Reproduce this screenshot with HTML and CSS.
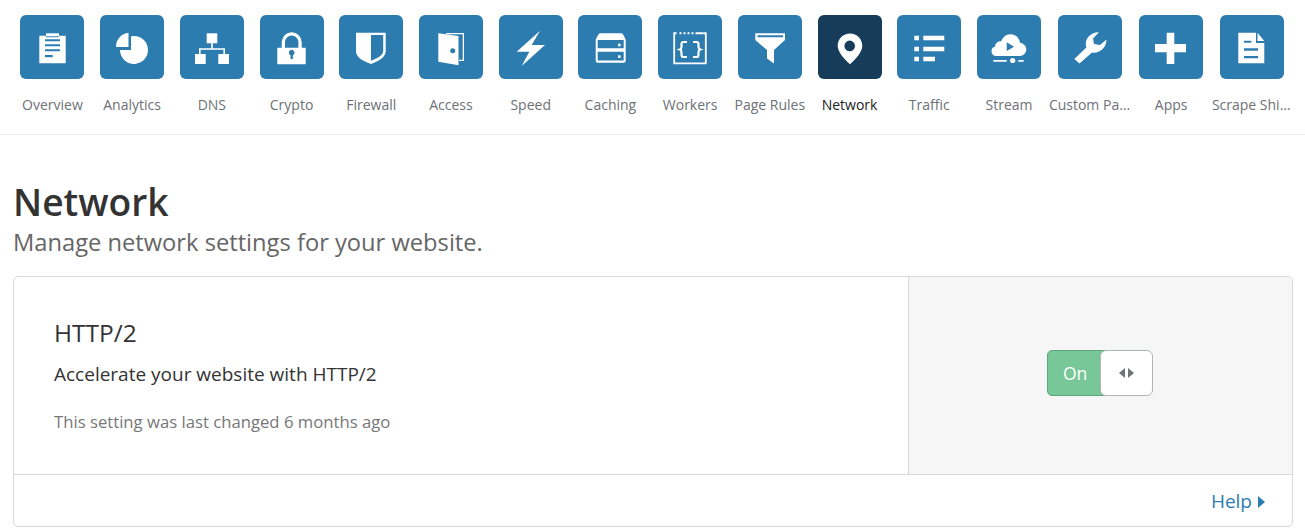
FILE: index.html
```html
<!DOCTYPE html>
<html lang="en">
<head>
<meta charset="utf-8">
<title>Network</title>
<link rel="stylesheet" href="styles.css">
</head>
<body>
<nav class="nav">
  <a class="nav-item"><span class="tile"><svg viewBox="0 0 64 64"><path fill-rule="evenodd" d="M19.3 20.7h6.7v1.6h13v-1.6h6.7v27.6H19.3zM25 24.3v2h15v-2zM25 29.3v2h15v-2zM25 34.3v2h15v-2zM25 40v2.3h7.7V40z"/><rect x="26" y="18.3" width="13" height="3"/></svg></span><span class="label">Overview</span></a>
  <a class="nav-item"><span class="tile"><svg viewBox="0 0 64 64"><path d="M28.5 32V17.7A14 14 0 0 0 16 32z"/><path d="M31 21.3A14 14 0 1 1 20 35h11z"/></svg></span><span class="label">Analytics</span></a>
  <a class="nav-item"><span class="tile"><svg viewBox="0 0 64 64"><rect x="26.7" y="18.3" width="10.6" height="10"/><rect x="15" y="39" width="10.7" height="10"/><rect x="38.3" y="39" width="10.7" height="10"/><path d="M31.2 28h1.6v5.2H45V39h-1.6v-4.2H20.6V39H19v-5.8h12.2z"/></svg></span><span class="label">DNS</span></a>
  <a class="nav-item"><span class="tile"><svg viewBox="0 0 64 64"><path fill-rule="evenodd" d="M21.7 32.7v-5.4a10 10 0 0 1 20 0v5.4h4v16.6H17.3V32.7zM25 32.7h13.4v-5.4a6.700 6.700 0 0 0-13.400 0zM30.500 40.200v3.800h2.400v-3.800a2.800 2.800 0 1 0-2.400 0z"/></svg></span><span class="label">Crypto</span></a>
  <a class="nav-item"><span class="tile"><svg viewBox="0 0 64 64"><path fill-rule="evenodd" d="M17 17.700h29.700V36c0 5-4 9-14.700 13C21 45 17 41 17 36zM32 20v25.800c8.500-3.300 12.200-6.300 12.200-9.800V20z"/></svg></span><span class="label">Firewall</span></a>
  <a class="nav-item"><span class="tile"><svg viewBox="0 0 64 64"><path fill-rule="evenodd" d="M19.300 18.300L39.500 21v29.300l-20.200-3.600zM33.700 33.200a2.500 2.500 0 1 0 0 5 2.500 2.500 0 0 0 0-5z"/><path d="M27 18h18v28h-5v-1.300h3.700V19.300H27z"/></svg></span><span class="label">Access</span></a>
  <a class="nav-item"><span class="tile"><svg viewBox="0 0 64 64"><path d="M41 15.700L17.700 36.700h12.600L22.700 51 46 30H32.700z"/></svg></span><span class="label">Speed</span></a>
  <a class="nav-item"><span class="tile"><svg viewBox="0 0 64 64"><path fill-rule="evenodd" d="M22.500 18.300h20.500c.8 0 1.500.4 2 1l2.700 5.200v21.200c0 1.100-.9 2-2 2H19.700c-1.100 0-2-.9-2-2V24.500l2.800-5.200c.5-.6 1.200-1 2-1zM19.700 25v8.300h26V25zM19.700 36.700V45.500h26v-8.800z"/><rect x="40" y="28.700" width="2.600" height="2.600"/><rect x="40" y="40.300" width="2.600" height="2.600"/></svg></span><span class="label">Caching</span></a>
  <a class="nav-item"><span class="tile"><svg viewBox="0 0 64 64"><path d="M15.300 17.300h3.200v2h-1.400v28.200h29.800V19.300h-1.400v-2h3.200v32H15.300z"/><path d="M21.500 17.300h2v2h-2zM25.500 17.300h2v2h-2zM29.500 17.300h2v2h-2zM33.500 17.300h2v2h-2zM37.500 17.300h8v2h-8z"/><path class="brace" d="M29 27h-3.500c-1.500 0-2 .7-2 2v3c0 1.400-.6 2.100-1.800 2.500 1.200.4 1.800 1.100 1.800 2.500v3c0 1.300.5 2 2 2H29M35 27h3.500c1.500 0 2 .7 2 2v3c0 1.400.6 2.100 1.800 2.500-1.200.4-1.800 1.100-1.800 2.500v3c0 1.300-.5 2-2 2H35"/></svg></span><span class="label">Workers</span></a>
  <a class="nav-item"><span class="tile"><svg viewBox="0 0 64 64"><path fill-rule="evenodd" d="M17.300 18.300H47V25L36 35v13.500L29 43.500V35L17.300 25zM19.500 20.300v2h25.500v-2z"/></svg></span><span class="label">Page Rules</span></a>
  <a class="nav-item active"><span class="tile"><svg viewBox="0 0 64 64"><path fill-rule="evenodd" d="M32 18.500c6.800 0 12.300 5.400 12.300 12.200 0 6.500-6.500 13-12.300 18.600-5.800-5.600-12.300-12.100-12.300-18.600 0-6.800 5.500-12.200 12.300-12.200zM31.700 25.600a5.300 5.300 0 1 0 0 10.600 5.300 5.300 0 0 0 0-10.600z"/></svg></span><span class="label">Network</span></a>
  <a class="nav-item"><span class="tile"><svg viewBox="0 0 64 64"><path d="M17.300 20.700H22v4.600h-4.700zM26.300 20.700h21v4.600h-21zM17.300 31.700H22v4.600h-4.700zM26.300 31.700h21v4.600h-21zM17.300 41.700H22v4.600h-4.700zM26.300 41.700H38v4.600H26.300z"/></svg></span><span class="label">Traffic</span></a>
  <a class="nav-item"><span class="tile"><svg viewBox="0 0 64 64"><path fill-rule="evenodd" d="M19 41a4.800 4.800 0 0 1-1-9.400c.2-3.400 3-5.800 6.200-5.300 1.600-4.200 5-7 9.300-7 5 0 9 3.500 9.500 8.500 3.600.4 6.300 3.200 6.300 6.800 0 3.600-3 6.400-6.500 6.400zM29.700 27.300V36l7.300-4.300z"/><path d="M16.300 45h13.400v1.700H16.300zM41.300 45h5.400v1.700h-5.400z"/><circle cx="35.700" cy="45.500" r="2.600"/></svg></span><span class="label">Stream</span></a>
  <a class="nav-item"><span class="tile"><svg viewBox="0 0 64 64"><path d="M21.500 48.500L16.300 44l12-11.500C26 24 32 17.500 41 17.300l-6 6.200 1 5.500 6 1 6.500-5.500C48.500 32 42 39 34 37.500z"/></svg></span><span class="label">Custom Pages</span></a>
  <a class="nav-item"><span class="tile"><svg viewBox="0 0 64 64"><path d="M27.700 17.700h7.600V29H47v8.300H35.300V49h-7.600V37.300H16V29h11.700z"/></svg></span><span class="label">Apps</span></a>
  <a class="nav-item"><span class="tile"><svg viewBox="0 0 64 64"><path fill-rule="evenodd" d="M18.300 17.700H36V28h8.300v20.300h-26zM24 25.700v2h7.300v-2zM24 33.300v2.400h14v-2.400zM24 41v2.300h14V41z"/><path d="M37.500 17.700l6.800 8.300h-6.800z"/></svg></span><span class="label">Scrape Shield</span></a>
</nav>
<main class="page">
  <h1 class="title">Network</h1>
  <p class="subtitle">Manage network settings for your website.</p>
  <section class="card">
    <div class="card-body">
      <div class="card-text">
        <h2 class="card-title">HTTP/2</h2>
        <p class="card-desc">Accelerate your website with HTTP/2</p>
        <p class="card-meta">This setting was last changed 6 months ago</p>
      </div>
      <div class="card-control">
        <div class="toggle">
          <span class="toggle-on">On</span>
          <span class="toggle-knob"><i class="arrow arrow-left"></i><i class="arrow arrow-right"></i></span>
        </div>
      </div>
    </div>
    <div class="card-footer"><a class="help">Help<i class="help-caret"></i></a></div>
  </section>
</main>
</body>
</html>
```
FILE: styles.css
```css
* { box-sizing: border-box; }
html, body { margin: 0; padding: 0; }
body {
  background: #fff;
  font-family: "Open Sans", sans-serif;
  color: #333;
  width: 1305px;
  height: 532px;
  overflow: hidden;
}
.nav {
  display: grid;
  grid-template-columns: repeat(13, 79.72px) 81.5px 81.5px 81.1px;
  height: 135px;
  padding: 15px 0 0 12.54px;
  border-bottom: 1px solid #ebebeb;
}
.nav-item {
  display: flex;
  flex-direction: column;
  align-items: center;
  min-width: 0;
  color: #6d7176;
}
.tile {
  width: 64px;
  height: 64px;
  border-radius: 6px;
  background: #2c7cb0;
  display: block;
  flex: none;
}
.tile svg { display: block; width: 64px; height: 64px; fill: #fff; }
.tile svg .brace { fill: none; stroke: #fff; stroke-width: 2.2; }
.label {
  display: block;
  width: 100%;
  margin-top: 16px;
  font-size: 14px;
  line-height: 20px;
  text-align: center;
  white-space: nowrap;
  overflow: hidden;
  text-overflow: ellipsis;
}
.active { color: #222; }
.active .tile { background: #163c5a; }
.page { padding: 0 12px 0 13px; }
.title {
  margin: 44px 0 0;
  font-size: 37.2px;
  line-height: 46px;
  font-weight: 600;
  color: #333;
}
.subtitle {
  margin: 2px 0 0;
  font-size: 23.7px;
  line-height: 30px;
  color: #666;
}
.card {
  margin-top: 19px;
  height: 251px;
  border: 1px solid #d9d9d9;
  border-radius: 5px;
  display: flex;
  flex-direction: column;
}
.card-body {
  display: flex;
  height: 198px;
  border-bottom: 1px solid #d9d9d9;
}
.card-text { flex: 1; padding: 40px 40px 0; }
.card-title {
  margin: 0;
  font-size: 24.5px;
  line-height: 32px;
  font-weight: 500;
  color: #333;
}
.card-desc {
  margin: 12px 0 0;
  font-size: 19px;
  line-height: 26px;
  color: #333;
}
.card-meta {
  margin: 23px 0 0;
  font-size: 16.7px;
  line-height: 24px;
  color: #777;
}
.card-control {
  width: 384px;
  flex: none;
  background: #f6f6f6;
  border-left: 1px solid #d9d9d9;
  border-top-right-radius: 5px;
  display: flex;
  justify-content: center;
  align-items: center;
  padding: 0 1px 5px 0;
}
.toggle { display: flex; width: 106px; height: 46px; }
.toggle-on {
  width: 60px;
  margin-right: -7px;
  background: #77c798;
  border: 1px solid #5fa67c;
  border-radius: 5px 0 0 5px;
  color: #fff;
  font-size: 17.5px;
  line-height: 44px;
  padding-left: 15px;
}
.toggle-knob {
  position: relative;
  flex: 1;
  background: #fff;
  border: 1px solid #adb5b5;
  border-radius: 6px;
  display: flex;
  align-items: center;
  justify-content: center;
  gap: 3px;
}
.arrow { width: 0; height: 0; border-top: 5px solid transparent; border-bottom: 5px solid transparent; }
.arrow-left { border-right: 6px solid #6d7479; }
.arrow-right { border-left: 6px solid #6d7479; }
.card-footer {
  flex: 1;
  display: flex;
  justify-content: flex-end;
  align-items: center;
  padding: 0 27px 0 0;
}
.help {
  display: flex;
  align-items: center;
  color: #2c7cb0;
  font-size: 19px;
  line-height: 24px;
}
.help-caret {
  margin-left: 6px;
  margin-top: 2px;
  width: 0;
  height: 0;
  border-top: 6px solid transparent;
  border-bottom: 6px solid transparent;
  border-left: 7px solid #2c7cb0;
}
```
